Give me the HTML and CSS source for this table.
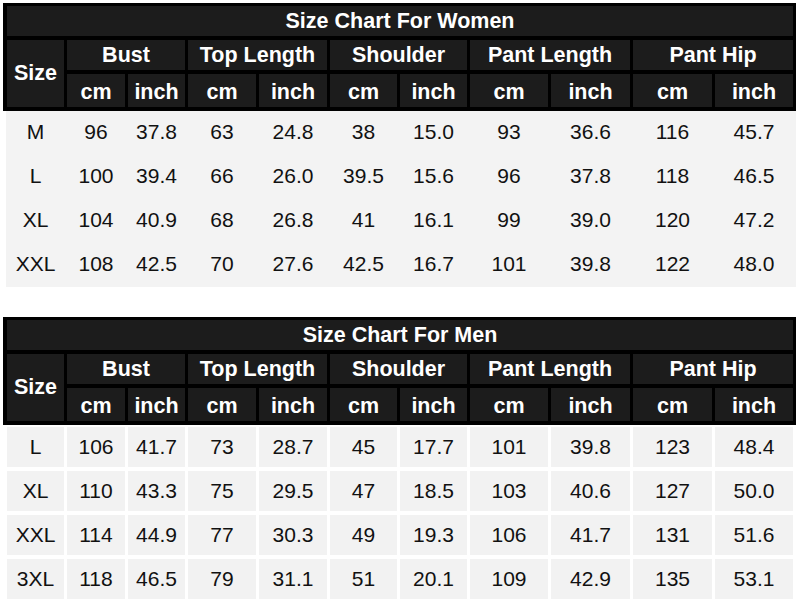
FILE: index.html
```html
<!DOCTYPE html>
<html>
<head>
<meta charset="utf-8">
<link rel="stylesheet" href="styles.css">
</head>
<body>
<div class="page">
  <section class="chart">
    <div class="head">
      <div class="hcell title">Size Chart For Women</div>
      <div class="hcell size">Size</div>
      <div class="hcell group">Bust</div>
      <div class="hcell group">Top Length</div>
      <div class="hcell group">Shoulder</div>
      <div class="hcell group">Pant Length</div>
      <div class="hcell group">Pant Hip</div>
      <div class="hcell unit">cm</div><div class="hcell unit">inch</div>
      <div class="hcell unit">cm</div><div class="hcell unit">inch</div>
      <div class="hcell unit">cm</div><div class="hcell unit">inch</div>
      <div class="hcell unit">cm</div><div class="hcell unit">inch</div>
      <div class="hcell unit">cm</div><div class="hcell unit">inch</div>
    </div>
    <div class="wbody">
      <div class="c">M</div><div class="c">96</div><div class="c">37.8</div><div class="c">63</div><div class="c">24.8</div><div class="c">38</div><div class="c">15.0</div><div class="c">93</div><div class="c">36.6</div><div class="c">116</div><div class="c">45.7</div>
      <div class="c">L</div><div class="c">100</div><div class="c">39.4</div><div class="c">66</div><div class="c">26.0</div><div class="c">39.5</div><div class="c">15.6</div><div class="c">96</div><div class="c">37.8</div><div class="c">118</div><div class="c">46.5</div>
      <div class="c">XL</div><div class="c">104</div><div class="c">40.9</div><div class="c">68</div><div class="c">26.8</div><div class="c">41</div><div class="c">16.1</div><div class="c">99</div><div class="c">39.0</div><div class="c">120</div><div class="c">47.2</div>
      <div class="c">XXL</div><div class="c">108</div><div class="c">42.5</div><div class="c">70</div><div class="c">27.6</div><div class="c">42.5</div><div class="c">16.7</div><div class="c">101</div><div class="c">39.8</div><div class="c">122</div><div class="c">48.0</div>
    </div>
  </section>

  <section class="chart men">
    <div class="head">
      <div class="hcell title">Size Chart For Men</div>
      <div class="hcell size">Size</div>
      <div class="hcell group">Bust</div>
      <div class="hcell group">Top Length</div>
      <div class="hcell group">Shoulder</div>
      <div class="hcell group">Pant Length</div>
      <div class="hcell group">Pant Hip</div>
      <div class="hcell unit">cm</div><div class="hcell unit">inch</div>
      <div class="hcell unit">cm</div><div class="hcell unit">inch</div>
      <div class="hcell unit">cm</div><div class="hcell unit">inch</div>
      <div class="hcell unit">cm</div><div class="hcell unit">inch</div>
      <div class="hcell unit">cm</div><div class="hcell unit">inch</div>
    </div>
    <div class="mbody">
      <div class="c">L</div><div class="c">106</div><div class="c">41.7</div><div class="c">73</div><div class="c">28.7</div><div class="c">45</div><div class="c">17.7</div><div class="c">101</div><div class="c">39.8</div><div class="c">123</div><div class="c">48.4</div>
      <div class="c">XL</div><div class="c">110</div><div class="c">43.3</div><div class="c">75</div><div class="c">29.5</div><div class="c">47</div><div class="c">18.5</div><div class="c">103</div><div class="c">40.6</div><div class="c">127</div><div class="c">50.0</div>
      <div class="c">XXL</div><div class="c">114</div><div class="c">44.9</div><div class="c">77</div><div class="c">30.3</div><div class="c">49</div><div class="c">19.3</div><div class="c">106</div><div class="c">41.7</div><div class="c">131</div><div class="c">51.6</div>
      <div class="c">3XL</div><div class="c">118</div><div class="c">46.5</div><div class="c">79</div><div class="c">31.1</div><div class="c">51</div><div class="c">20.1</div><div class="c">109</div><div class="c">42.9</div><div class="c">135</div><div class="c">53.1</div>
    </div>
  </section>
</div>
</body>
</html>
```
FILE: styles.css
```css
html, body {
  margin: 0;
  padding: 0;
  background: #ffffff;
}

.page {
  padding-top: 3px;
  font-family: "Liberation Sans", Arial, sans-serif;
  color: #111111;
}

.chart.men {
  margin-top: 30px;
}

.head {
  display: grid;
  grid-template-columns: 57px 58px 57px 68px 68px 67px 67px 78px 79px 79px 78px;
  grid-template-rows: 30px 30px 33px;
  column-gap: 3px;
  row-gap: 4px;
  padding: 3px 3px 4px 4px;
  margin-left: 3px;
  width: fit-content;
  background: #000000;
}

.hcell {
  background: #1c1c1c;
  color: #ffffff;
  font-weight: bold;
  font-size: 21.5px;
  display: flex;
  align-items: center;
  justify-content: center;
  white-space: nowrap;
}

.hcell.title {
  grid-column: 1 / -1;
}

.hcell.size {
  grid-row: 2 / 4;
}

.hcell.group {
  grid-column: span 2;
}

.hcell.unit {
  padding-top: 3px;
}

.wbody {
  display: grid;
  grid-template-columns: 57px 58px 57px 68px 68px 67px 67px 78px 79px 79px 78px;
  grid-auto-rows: 44px;
  column-gap: 3px;
  margin-left: 6px;
  width: 790px;
  box-sizing: border-box;
  padding-left: 1px;
  background: #f3f3f3;
}

.wbody .c {
  padding-bottom: 2px;
}

.mbody {
  display: grid;
  grid-template-columns: 57px 58px 57px 68px 68px 67px 67px 78px 79px 79px 78px;
  grid-auto-rows: 40px;
  column-gap: 3px;
  row-gap: 4px;
  margin-left: 3px;
  padding: 2px 3px 0 4px;
  width: fit-content;
}

.mbody .c {
  background: #f2f2f2;
  padding-bottom: 1px;
}

.c {
  font-size: 21px;
  display: flex;
  align-items: center;
  justify-content: center;
  white-space: nowrap;
}
```
